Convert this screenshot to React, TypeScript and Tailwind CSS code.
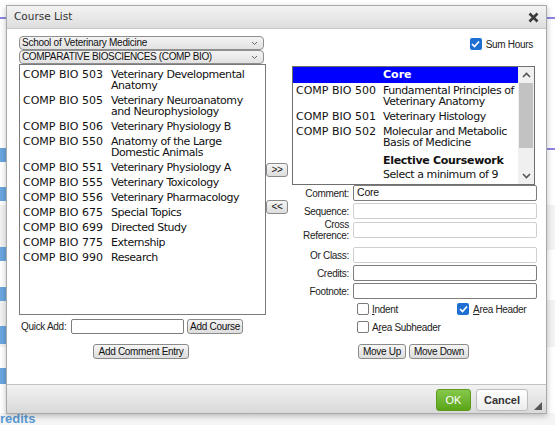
import React from "react";

const LIST_FONT = { fontFamily: '"DejaVu Sans", Verdana, sans-serif' };
const UI_FONT = { fontFamily: '"Liberation Sans", Arial, sans-serif' };

function Chevron({ up = false }: { up?: boolean }) {
  return (
    <svg width="9" height="6" viewBox="0 0 9 6">
      <path
        d={up ? "M1 5 L4.5 1.5 L8 5" : "M1 1 L4.5 4.5 L8 1"}
        stroke="#555"
        strokeWidth="1.6"
        fill="none"
      />
    </svg>
  );
}

function SelectBox({ text, big = false }: { text: string; big?: boolean }) {
  return (
    <div
      className={`h-[14px] w-[245px] flex items-center justify-between rounded-[4px] border border-[#8f8f8f] bg-gradient-to-b from-[#f4f4f4] to-[#e2e2e2] pl-[2px] pr-[5px] leading-none text-[#111] ${
        big ? "text-[10px] tracking-[-0.35px]" : "text-[10px] tracking-[-0.25px]"
      }`}
      style={UI_FONT}
    >
      <span>{text}</span>
      <svg width="7" height="5" viewBox="0 0 7 5">
        <path d="M1 1 L3.5 3.5 L6 1" stroke="#666" strokeWidth="1" fill="none" />
      </svg>
    </div>
  );
}

function Btn({ children, w, h = 15 }: { children: React.ReactNode; w: number; h?: number }) {
  return (
    <div
      className="flex items-center justify-center rounded-[3px] border border-[#8a8a8a] bg-gradient-to-b from-[#f6f6f6] to-[#dddddd] text-[10px] tracking-[-0.3px] leading-none text-[#111]"
      style={{ ...UI_FONT, width: w, height: h }}
    >
      {children}
    </div>
  );
}

function Check({ checked }: { checked: boolean }) {
  if (checked)
    return (
      <div className="w-[12px] h-[12px] rounded-[2px] bg-[#1f6fd2] flex items-center justify-center shrink-0">
        <svg width="9" height="8" viewBox="0 0 9 8">
          <path d="M1 4 L3.5 6.5 L8 1.5" stroke="#fff" strokeWidth="1.7" fill="none" />
        </svg>
      </div>
    );
  return <div className="w-[12px] h-[12px] rounded-[2px] border border-[#7a7a7a] bg-white shrink-0" />;
}

const leftCourses: [string, string][] = [
  ["COMP BIO 503", "Veterinary Developmental Anatomy"],
  ["COMP BIO 505", "Veterinary Neuroanatomy and Neurophysiology"],
  ["COMP BIO 506", "Veterinary Physiology B"],
  ["COMP BIO 550", "Anatomy of the Large Domestic Animals"],
  ["COMP BIO 551", "Veterinary Physiology A"],
  ["COMP BIO 555", "Veterinary Toxicology"],
  ["COMP BIO 556", "Veterinary Pharmacology"],
  ["COMP BIO 675", "Special Topics"],
  ["COMP BIO 699", "Directed Study"],
  ["COMP BIO 775", "Externship"],
  ["COMP BIO 990", "Research"],
];

const rightCourses: [string, string][] = [
  ["COMP BIO 500", "Fundamental Principles of Veterinary Anatomy"],
  ["COMP BIO 501", "Veterinary Histology"],
  ["COMP BIO 502", "Molecular and Metabolic Basis of Medicine"],
];

function FormRow({
  label,
  light = false,
  value = "",
  h = 16,
  mt = 2,
}: {
  label: React.ReactNode;
  light?: boolean;
  value?: string;
  h?: number;
  mt?: number;
}) {
  return (
    <div className="flex items-center" style={{ height: h, marginTop: mt }}>
      <div
        className="w-[57px] text-right text-[10px] tracking-[-0.3px] leading-[11px] text-[#222]"
        style={UI_FONT}
      >
        {label}
      </div>
      <div
        className={`ml-[4px] h-[16px] w-[184px] rounded-[2px] border bg-white flex items-center pl-[3px] text-[10.5px] tracking-[-0.2px] text-[#111] ${
          light ? "border-[#cfcfcf]" : "border-[#7d7d7d]"
        }`}
        style={UI_FONT}
      >
        {value}
      </div>
    </div>
  );
}

export default function App() {
  return (
    <div className="relative w-[555px] h-[425px] overflow-hidden bg-white">
      {/* background page */}
      <div className="absolute left-0 top-[17px] w-[555px] h-[2px] bg-[#8a86e0]" />
      <div className="absolute right-0 top-[148px] w-[10px] h-[2px] bg-[#8a86e0]" />
      <div className="absolute left-0 top-[205px] w-[555px] h-[45px] bg-[#f3f3f3]" />
      <div className="absolute left-0 top-[300px] w-[555px] h-[47px] bg-[#f3f3f3]" />
      <div className="absolute left-0 top-[413px] w-[555px] h-[12px] bg-[#f5f5f5]" />
      <div className="absolute left-0 top-[148px] w-[8px] h-[14px] bg-[#6aa6e0]" />
      <div className="absolute left-0 top-[187px] w-[8px] h-[14px] bg-[#6aa6e0]" />
      <div className="absolute left-0 top-[247px] w-[8px] h-[14px] bg-[#6aa6e0]" />
      <div className="absolute left-0 top-[287px] w-[8px] h-[14px] bg-[#6aa6e0]" />
      <div className="absolute left-0 top-[326px] w-[8px] h-[18px] bg-[#6aa6e0]" />
      <div className="absolute left-0 top-[368px] w-[8px] h-[16px] bg-[#6aa6e0]" />
      <div
        className="absolute left-0 top-[412px] text-[13px] font-bold text-[#5b9bd5] leading-none"
        style={UI_FONT}
      >
        redits
      </div>

      {/* dialog */}
      <div className="absolute left-[6px] top-[5px] w-[541px] h-[409px] border border-[#a9a9a9] bg-white flex flex-col shadow-[0_2px_6px_rgba(0,0,0,0.25)]">
        {/* title bar */}
        <div className="h-[23px] shrink-0 flex items-center justify-between border-b border-[#c6c6c6] bg-gradient-to-b from-[#f3f3f3] to-[#dedede] pl-[7px] pr-[7px]">
          <span className="text-[10.5px] text-[#333]" style={LIST_FONT}>
            Course List
          </span>
          <svg width="11" height="11" viewBox="0 0 11 11">
            <path d="M1.5 1.5 L9.5 9.5 M9.5 1.5 L1.5 9.5" stroke="#3a3a3a" strokeWidth="2.6" />
          </svg>
        </div>

        {/* body */}
        <div className="flex-1 flex pl-[12px] pt-[7px]">
          {/* left column */}
          <div className="w-[247px] flex flex-col">
            <SelectBox text="School of Veterinary Medicine" />
            <SelectBox text="COMPARATIVE BIOSCIENCES (COMP BIO)" big />
            <div className="h-[251px] w-[247px] border border-[#7a7a7a] bg-white pt-[2px] pl-[3px]" style={LIST_FONT}>
              {leftCourses.map(([c, t]) => (
                <div key={c} className="flex py-[2px] text-[11px] leading-[11px] text-[#111]">
                  <div className="w-[88px] shrink-0">{c}</div>
                  <div className="w-[148px] tracking-[-0.45px]">{t}</div>
                </div>
              ))}
            </div>
            <div className="mt-[4px] h-[15px] flex items-center">
              <span className="ml-[2px] w-[50px] text-[10px] tracking-[-0.3px] text-[#222]" style={UI_FONT}>
                Quick Add:
              </span>
              <div className="w-[113px] h-[15px] border border-[#7d7d7d] rounded-[2px] bg-white" />
              <div className="ml-[3px]">
                <Btn w={56}>Add Course</Btn>
              </div>
            </div>
            <div className="mt-[10px] ml-[74px]">
              <Btn w={96}>Add Comment Entry</Btn>
            </div>
          </div>

          {/* middle column */}
          <div className="w-[26px] flex flex-col">
            <div className="mt-[127px]">
              <Btn w={22} h={14}>&gt;&gt;</Btn>
            </div>
            <div className="mt-[23px]">
              <Btn w={22} h={14}>&lt;&lt;</Btn>
            </div>
          </div>

          {/* right column */}
          <div className="w-[245px] flex flex-col">
            <div className="h-[16px] flex items-center justify-end pr-[4px]">
              <Check checked />
              <span className="ml-[4px] text-[10px] tracking-[-0.3px] text-[#222]" style={UI_FONT}>
                Sum Hours
              </span>
            </div>
            <div className="mt-[14px] w-[243px] h-[119px] border border-[#6f6f6f] bg-white flex overflow-hidden" style={LIST_FONT}>
              <div className="flex-1 overflow-hidden">
                <div className="h-[16px] bg-[#0000ff] flex items-center text-[11px] font-bold text-white">
                  <div className="w-[90px] shrink-0" />
                  <div>Core</div>
                </div>
                {rightCourses.map(([c, t]) => (
                  <div key={c} className="flex py-[2px] pl-[3px] text-[11px] leading-[11px] text-[#111]">
                    <div className="w-[87px] shrink-0">{c}</div>
                    <div className="w-[136px] tracking-[-0.45px]">{t}</div>
                  </div>
                ))}
                <div className="flex pt-[5px] pb-[2px] pl-[3px] text-[11px] leading-[11px] text-[#111] font-bold">
                  <div className="w-[87px] shrink-0" />
                  <div className="tracking-[-0.3px]">Elective Coursework</div>
                </div>
                <div className="flex pt-[1px] pl-[3px] text-[11px] leading-[11px] text-[#111]">
                  <div className="w-[87px] shrink-0" />
                  <div className="w-[136px] tracking-[-0.45px]">Select a minimum of 9</div>
                </div>
              </div>
              <div className="w-[16px] shrink-0 bg-[#f0f0f0] flex flex-col">
                <div className="h-[16px] flex items-center justify-center">
                  <Chevron up />
                </div>
                <div className="h-[65px] mx-[1px] bg-[#c2c2c2]" />
                <div className="flex-1" />
                <div className="h-[16px] flex items-center justify-center">
                  <Chevron />
                </div>
              </div>
            </div>

            <div>
              <FormRow label="Comment:" value="Core" mt={0} />
              <FormRow label="Sequence:" light />
              <FormRow
                label={
                  <>
                    Cross
                    <br />
                    Reference:
                  </>
                }
                light
                h={22}
                mt={0}
              />
              <FormRow label="Or Class:" light mt={6} />
              <FormRow label="Credits:" />
              <FormRow label="Footnote:" />
            </div>

            <div className="mt-[3px] pl-[65px] flex flex-col text-[10px] tracking-[-0.3px] text-[#222]" style={UI_FONT}>
              <div className="h-[14px] flex items-center">
                <div className="w-[100px] flex items-center">
                  <Check checked={false} />
                  <span className="ml-[3px]">
                    <span className="underline">I</span>ndent
                  </span>
                </div>
                <div className="flex items-center">
                  <Check checked />
                  <span className="ml-[4px]">
                    <span className="underline">A</span>rea Header
                  </span>
                </div>
              </div>
              <div className="mt-[4px] h-[14px] flex items-center">
                <Check checked={false} />
                <span className="ml-[3px]">
                  A<span className="underline">r</span>ea Subheader
                </span>
              </div>
            </div>

            <div className="mt-[10px] pl-[66px] flex gap-[3px]">
              <Btn w={48}>Move Up</Btn>
              <Btn w={60}>Move Down</Btn>
            </div>
          </div>
        </div>

        {/* footer */}
        <div className="relative h-[29px] shrink-0 border-t border-[#c4c4c4] bg-gradient-to-b from-[#f2f2f2] to-[#d9d9d9] flex items-start justify-end pt-[4px] pr-[18px] gap-[5px]">
          <div
            className="w-[35px] h-[22px] rounded-[3px] border border-[#5b9a1c] bg-gradient-to-b from-[#86c84a] to-[#5aa514] flex items-center justify-center text-[11px] text-white"
            style={UI_FONT}
          >
            OK
          </div>
          <div
            className="w-[52px] h-[22px] rounded-[3px] border border-[#bdbdbd] bg-gradient-to-b from-[#ffffff] to-[#ececec] flex items-center justify-center text-[11px] font-bold text-[#333]"
            style={UI_FONT}
          >
            Cancel
          </div>
          <svg className="absolute right-[4px] bottom-[3px]" width="8" height="8" viewBox="0 0 8 8">
            <path d="M8 0 L8 8 L0 8 Z" fill="#555" />
          </svg>
        </div>
      </div>
    </div>
  );
}
